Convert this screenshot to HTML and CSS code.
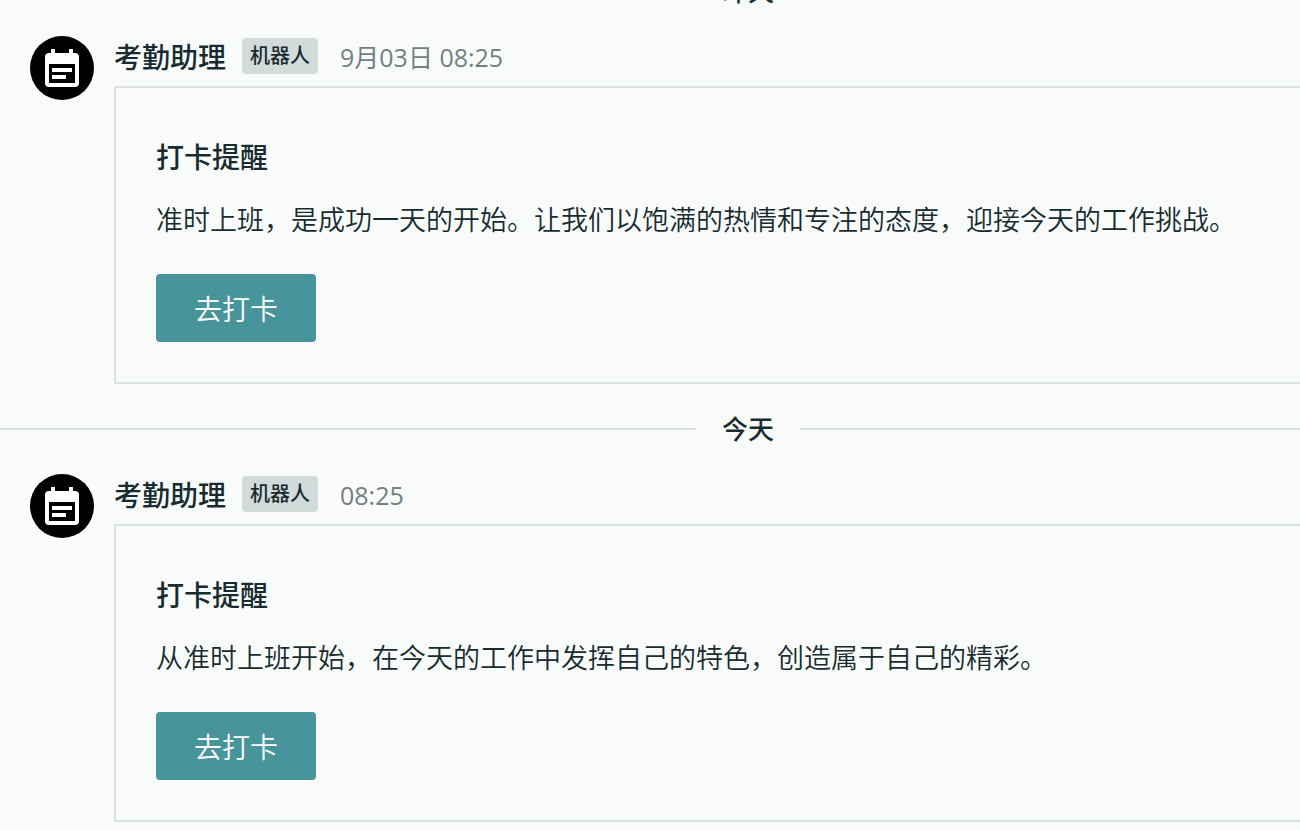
FILE: index.html
```
<!DOCTYPE html>
<html lang="zh-CN">
<head>
    <meta charset="UTF-8">
    <meta name="viewport" content="width=device-width, initial-scale=1.0">
    <title>考勤助理</title>
    <link rel="stylesheet" href="styles.css">
</head>
<body>
    <div class="viewport">
        <div class="feed">
            <div class="day"><span>昨天</span></div>

            <div class="message">
                <div class="avatar">
                    <svg viewBox="0 0 64 64" width="64" height="64" aria-hidden="true">
                        <path fill="#fff" fill-rule="evenodd" d="M21 13h4v4h14v-4h4v4h2a4 4 0 0 1 4 4v26a4 4 0 0 1-4 4H19a4 4 0 0 1-4-4V21a4 4 0 0 1 4-4h2zM19 28v19h26V28z"/>
                        <path fill="#fff" d="M22 32h20v4H22zM22 39h14v4H22z"/>
                    </svg>
                </div>
                <div class="content">
                    <div class="header">
                        <span class="name">考勤助理</span>
                        <span class="tag">机器人</span>
                        <span class="time">9月03日 08:25</span>
                    </div>
                    <div class="card">
                        <h2>打卡提醒</h2>
                        <p>准时上班，是成功一天的开始。让我们以饱满的热情和专注的态度，迎接今天的工作挑战。</p>
                        <button type="button">去打卡</button>
                    </div>
                </div>
            </div>

            <div class="day"><span>今天</span></div>

            <div class="message">
                <div class="avatar">
                    <svg viewBox="0 0 64 64" width="64" height="64" aria-hidden="true">
                        <path fill="#fff" fill-rule="evenodd" d="M21 13h4v4h14v-4h4v4h2a4 4 0 0 1 4 4v26a4 4 0 0 1-4 4H19a4 4 0 0 1-4-4V21a4 4 0 0 1 4-4h2zM19 28v19h26V28z"/>
                        <path fill="#fff" d="M22 32h20v4H22zM22 39h14v4H22z"/>
                    </svg>
                </div>
                <div class="content">
                    <div class="header">
                        <span class="name">考勤助理</span>
                        <span class="tag">机器人</span>
                        <span class="time">08:25</span>
                    </div>
                    <div class="card">
                        <h2>打卡提醒</h2>
                        <p>从准时上班开始，在今天的工作中发挥自己的特色，创造属于自己的精彩。</p>
                        <button type="button">去打卡</button>
                    </div>
                </div>
            </div>
        </div>
    </div>
</body>
</html>
```
FILE: styles.css
```
body {
    margin: 0;
    background-color: #f9fbfa;
    color: #182b2f;
    font-family: "Open Sans", "Noto Sans CJK SC", sans-serif;
}
.viewport {
    height: 100vh;
    overflow: hidden;
    display: flow-root;
}
/* the feed is scrolled up a little and runs past the right edge */
.feed {
    margin-top: -29px;
    margin-right: -196px;
}
.day {
    display: flex;
    align-items: center;
    height: 40px;
    font-size: 26px;
    font-weight: 500;
    line-height: 40px;
}
.day::before,
.day::after {
    content: "";
    flex: 1;
    height: 2px;
    background-color: #dbe0e1;
}
.day span {
    padding: 0 26px;
}
.message {
    display: flex;
    gap: 20px;
    padding: 25px 30px;
}
.avatar {
    flex: none;
    width: 64px;
    height: 64px;
    border-radius: 50%;
    background-color: #000;
}
.avatar svg {
    display: block;
}
.content {
    flex: 1;
}
.header {
    display: flex;
    align-items: flex-start;
    height: 42px;
    margin-bottom: 8px;
}
.name {
    font-size: 28px;
    font-weight: 500;
    line-height: 42px;
}
.tag {
    margin: 2px 22px 0 16px;
    padding: 0 8px;
    border-radius: 4px;
    background-color: #d3dada;
    font-size: 20px;
    font-weight: 500;
    line-height: 36px;
}
.time {
    color: #737f82;
    font-size: 25px;
    line-height: 42px;
}
.card {
    padding: 49px 40px 40px;
    border: 2px solid #dce1e1;
}
.card h2 {
    margin: 0 0 23px;
    font-size: 28px;
    font-weight: 500;
    line-height: 40px;
}
.card p {
    margin: 0 0 34px;
    font-size: 27px;
    font-weight: 350;
    line-height: 40px;
}
.card button {
    display: block;
    padding: 15px 38px 13px;
    border: 0;
    border-radius: 4px;
    background-color: #47959b;
    color: #fff;
    font-family: inherit;
    font-size: 28px;
    font-weight: 350;
    line-height: 40px;
    cursor: pointer;
}
```
